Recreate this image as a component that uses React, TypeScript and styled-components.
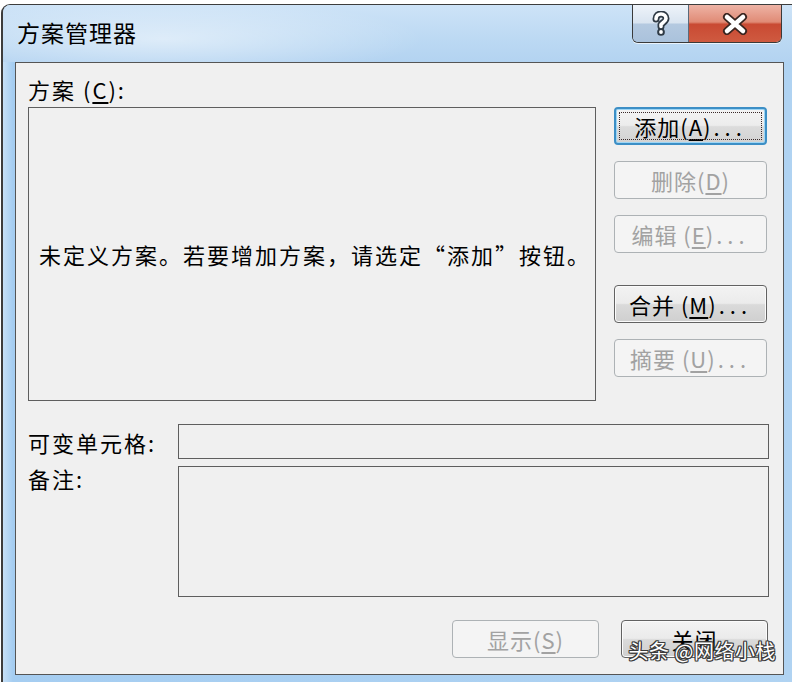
import React from "react";
import styled, { createGlobalStyle, css } from "styled-components";

const GlobalStyle = createGlobalStyle`
  html, body { margin: 0; padding: 0; background: #ffffff; }
  body { font-family: "Noto Sans CJK SC", "Noto Sans", sans-serif; }
  * { box-sizing: border-box; }
`;

const outline = (c: string, w: number) =>
  `${w}px 0 0 ${c}, -${w}px 0 0 ${c}, 0 ${w}px 0 ${c}, 0 -${w}px 0 ${c}, ${w}px ${w}px 0 ${c}, -${w}px ${w}px 0 ${c}, ${w}px -${w}px 0 ${c}, -${w}px -${w}px 0 ${c}`;

const Window = styled.div`
  margin: 4px 0 0 1px;
  width: 791px;
  height: 678px;
  border-top: 1px solid #3d3d3d;
  border-left: 2px solid #3d3d3d;
  border-top-left-radius: 9px;
  background: linear-gradient(90deg, #c6e0f7 0px, #a5cdf1 10px, #b0d3f2 100%);
  display: flex;
  flex-direction: column;
  overflow: hidden;
`;

const TitleBar = styled.div`
  height: 57px;
  flex: none;
  display: flex;
  justify-content: space-between;
  align-items: flex-start;
  background:
    radial-gradient(ellipse 260px 40px at 160px 34px, rgba(255,255,255,0.5), rgba(255,255,255,0) 100%),
    linear-gradient(180deg, #cde3f7 0%, #bcd9f3 60%, #b3d3f1 100%);
`;

const Title = styled.div`
  margin: 14px 0 0 14px;
  font-size: 23px;
  line-height: 26px;
  letter-spacing: 1px;
  color: #000;
`;

const CaptionGroup = styled.div`
  margin-right: 10px;
  display: flex;
  border: 1px solid #3a3a3a;
  border-top: none;
  border-radius: 0 0 6px 6px;
  overflow: hidden;
  box-shadow: 0 1px 0 rgba(255,255,255,0.7);
`;

const CaptionButton = styled.div<{ $kind: "help" | "close" }>`
  height: 37px;
  display: flex;
  align-items: center;
  justify-content: center;
  ${(p) =>
    p.$kind === "help"
      ? css`
          width: 56px;
          border-right: 1px solid #5a6a7a;
          background: linear-gradient(180deg, #eef3f9 0%, #d9e4f0 48%, #b4c9e0 52%, #aac2dc 100%);
        `
      : css`
          width: 92px;
          background: linear-gradient(180deg, #eeb3a5 0%, #e08b76 46%, #c94a33 52%, #cf5a40 100%);
        `}
`;

const Client = styled.div`
  position: relative;
  flex: 1;
  margin: 0 0 7px 12px;
  width: 769px;
  border: 1px solid #555;
  background: #f0f0f0;
  padding: 12px 14px 15px 12px;
  display: flex;
  flex-direction: column;
  color: #000;
`;

const TopSection = styled.div`
  display: grid;
  grid-template-columns: 568px 153px;
  grid-template-rows: 32px 294px;
  column-gap: 18px;
`;

const Label = styled.div`
  font-size: 22px;
  line-height: 32px;
  letter-spacing: 2px;
  white-space: nowrap;
`;

const ListLabel = styled(Label)`
  grid-column: 1;
  grid-row: 1;
  line-height: 26px;
  margin-top: 1px;
`;

const ListBox = styled.div`
  grid-column: 1;
  grid-row: 2;
  border: 1px solid #5e5e5e;
  background: #f0f0f0;
  display: flex;
  align-items: center;
  justify-content: center;
`;

const EmptyText = styled.div`
  font-size: 22px;
  letter-spacing: 2px;
  white-space: nowrap;
  margin-left: 6px;
`;

const ButtonStack = styled.div`
  grid-column: 2;
  grid-row: 2;
  display: flex;
  flex-direction: column;
  gap: 16px;
`;

const Spacer = styled.div`
  height: 16px;
  margin: -16px 0 0;
  flex: none;
`;

type Variant = "normal" | "default" | "disabled";

const Btn = styled.div<{ $variant: Variant; $w?: number }>`
  position: relative;
  flex: none;
  height: 38px;
  width: ${(p) => (p.$w ? `${p.$w}px` : "100%")};
  border-radius: 4px;
  display: flex;
  align-items: center;
  justify-content: center;
  font-size: 22px;
  letter-spacing: 1px;
  white-space: nowrap;
  ${(p) =>
    p.$variant === "disabled"
      ? css`
          border: 1px solid #adb2b5;
          background: #f4f4f4;
          color: #a2a2a2;
        `
      : p.$variant === "default"
      ? css`
          border: 2px solid #3c8fc6;
          box-shadow: inset 0 0 0 1px #9ed6f5;
          background: linear-gradient(180deg, #f4f4f4 0%, #ececec 48%, #dcdcdc 52%, #d2d2d2 100%);
          color: #000;
          &::after {
            content: "";
            position: absolute;
            inset: 3px;
            border: 1.5px dotted #3a2a2a;
            border-radius: 1px;
          }
        `
      : css`
          border: 1px solid #626262;
          box-shadow: inset 0 0 0 1px #fbfbfb;
          background: linear-gradient(180deg, #f3f3f3 0%, #ebebeb 48%, #dadada 52%, #cfcfcf 100%);
          color: #000;
        `}
`;

const Dots = styled.span`
  letter-spacing: 5px;
  margin-left: 2px;
`;

const Mn = styled.u`
  text-underline-offset: 3px;
`;

const Fields = styled.div`
  margin-top: 23px;
  display: grid;
  grid-template-columns: 150px 1fr;
  grid-template-rows: 35px 131px;
  row-gap: 7px;
`;

const FieldLabel = styled(Label)<{ $top?: boolean }>`
  align-self: ${(p) => (p.$top ? "start" : "center")};
  margin-top: ${(p) => (p.$top ? "-4px" : "0")};
`;

const Input = styled.div`
  border: 1px solid #5e5e5e;
  background: #f0f0f0;
`;

const Footer = styled.div`
  margin-top: 23px;
  display: flex;
  justify-content: flex-end;
  gap: 22px;
  padding-right: 1px;
`;

const Watermark = styled.div`
  position: absolute;
  right: 7px;
  bottom: 8px;
  font-size: 20px;
  line-height: 30px;
  color: #fff;
  letter-spacing: 0.5px;
  white-space: nowrap;
  text-shadow: ${outline("#3a3a3a", 1)};
`;

const HelpIcon = () => (
  <svg width="22" height="26" viewBox="0 0 22 26">
    <g fill="none" strokeLinecap="round" strokeLinejoin="round">
      <path d="M6 8 C6 4.5 8.5 3 11 3 C14 3 16 5 16 7.5 C16 10.5 12.5 11.5 11 13.5 L11 15.5" stroke="#2f3a45" strokeWidth="7" />
      <circle cx="11" cy="21" r="2.6" fill="#2f3a45" stroke="#2f3a45" strokeWidth="2.5" />
      <path d="M6 8 C6 4.5 8.5 3 11 3 C14 3 16 5 16 7.5 C16 10.5 12.5 11.5 11 13.5 L11 15.5" stroke="#fff" strokeWidth="3.6" />
      <circle cx="11" cy="21" r="1.9" fill="#fff" />
    </g>
  </svg>
);

const CloseX = () => (
  <svg width="26" height="22" viewBox="0 0 26 22">
    <path d="M5 4 L21 18 M21 4 L5 18" stroke="#3a2520" strokeWidth="8" strokeLinecap="round" fill="none" />
    <path d="M5 4 L21 18 M21 4 L5 18" stroke="#fff" strokeWidth="4.5" strokeLinecap="round" fill="none" />
  </svg>
);

export default function App() {
  return (
    <>
      <GlobalStyle />
      <Window>
        <TitleBar>
          <Title>方案管理器</Title>
          <CaptionGroup>
            <CaptionButton $kind="help">
              <HelpIcon />
            </CaptionButton>
            <CaptionButton $kind="close">
              <CloseX />
            </CaptionButton>
          </CaptionGroup>
        </TitleBar>
        <Client>
          <TopSection>
            <ListLabel>
              方案 (<Mn>C</Mn>):
            </ListLabel>
            <ListBox>
              <EmptyText>未定义方案。若要增加方案，请选定“添加”按钮。</EmptyText>
            </ListBox>
            <ButtonStack>
              <Btn $variant="default">
                添加(<Mn>A</Mn>)<Dots>...</Dots>
              </Btn>
              <Btn $variant="disabled">
                删除(<Mn>D</Mn>)
              </Btn>
              <Btn $variant="disabled">
                编辑 (<Mn>E</Mn>)<Dots>...</Dots>
              </Btn>
              <Spacer />
              <Btn $variant="normal">
                合并 (<Mn>M</Mn>)<Dots>...</Dots>
              </Btn>
              <Btn $variant="disabled">
                摘要 (<Mn>U</Mn>)<Dots>...</Dots>
              </Btn>
            </ButtonStack>
          </TopSection>
          <Fields>
            <FieldLabel>可变单元格:</FieldLabel>
            <Input />
            <FieldLabel $top>备注:</FieldLabel>
            <Input />
          </Fields>
          <Footer>
            <Btn $variant="disabled" $w={147}>
              显示(<Mn>S</Mn>)
            </Btn>
            <Btn $variant="normal" $w={147}>
              关闭
            </Btn>
          </Footer>
          <Watermark>头条 @网络小栈</Watermark>
        </Client>
      </Window>
    </>
  );
}
